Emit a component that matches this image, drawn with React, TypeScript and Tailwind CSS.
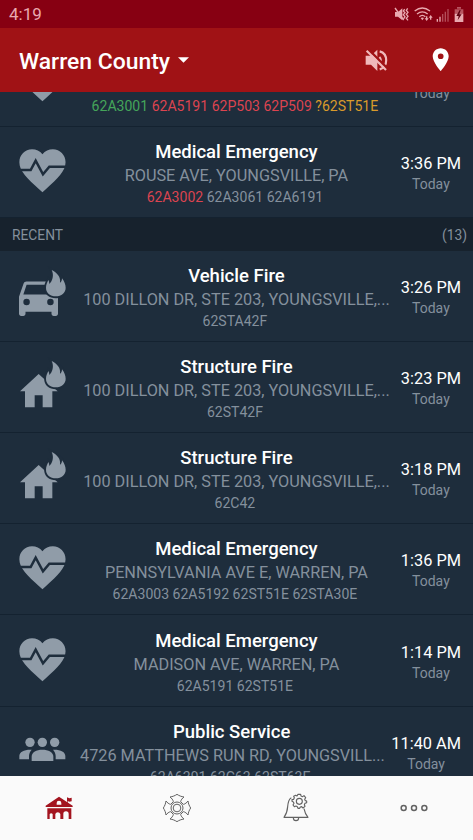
// App.tsx
// Incident feed: status bar, county selector, active/recent calls, bottom tabs
import clsx from 'clsx'
import type React from 'react'

type IconKind = 'medical' | 'vehicle' | 'structure' | 'people'
type UnitState = 'idle' | 'enroute' | 'onscene' | 'unknown'

interface Unit {
  id: string
  state?: UnitState
}

interface Incident {
  type: string
  icon: IconKind
  address: string
  units: Unit[]
  time: string
}

const ACTIVE: Incident[] = [
  {
    type: 'Medical Emergency',
    icon: 'medical',
    address: 'HAMILTON AVE, WARREN, PA',
    units: [
      { id: '62A3001', state: 'onscene' },
      { id: '62A5191', state: 'enroute' },
      { id: '62P503', state: 'enroute' },
      { id: '62P509', state: 'enroute' },
      { id: '?62ST51E', state: 'unknown' },
    ],
    time: '3:58 PM',
  },
  {
    type: 'Medical Emergency',
    icon: 'medical',
    address: 'ROUSE AVE, YOUNGSVILLE, PA',
    units: [{ id: '62A3002', state: 'enroute' }, { id: '62A3061' }, { id: '62A6191' }],
    time: '3:36 PM',
  },
]

const RECENT: Incident[] = [
  {
    type: 'Vehicle Fire',
    icon: 'vehicle',
    address: '100 DILLON DR, STE 203, YOUNGSVILLE,...',
    units: [{ id: '62STA42F' }],
    time: '3:26 PM',
  },
  {
    type: 'Structure Fire',
    icon: 'structure',
    address: '100 DILLON DR, STE 203, YOUNGSVILLE,...',
    units: [{ id: '62ST42F' }],
    time: '3:23 PM',
  },
  {
    type: 'Structure Fire',
    icon: 'structure',
    address: '100 DILLON DR, STE 203, YOUNGSVILLE,...',
    units: [{ id: '62C42' }],
    time: '3:18 PM',
  },
  {
    type: 'Medical Emergency',
    icon: 'medical',
    address: 'PENNSYLVANIA AVE E, WARREN, PA',
    units: [{ id: '62A3003' }, { id: '62A5192' }, { id: '62ST51E' }, { id: '62STA30E' }],
    time: '1:36 PM',
  },
  {
    type: 'Medical Emergency',
    icon: 'medical',
    address: 'MADISON AVE, WARREN, PA',
    units: [{ id: '62A5191' }, { id: '62ST51E' }],
    time: '1:14 PM',
  },
  {
    type: 'Public Service',
    icon: 'people',
    address: '4726 MATTHEWS RUN RD, YOUNGSVILL...',
    units: [{ id: '62A6391' }, { id: '62C63' }, { id: '62ST63E' }],
    time: '11:40 AM',
  },
]

const UNIT_COLORS: Record<UnitState, string> = {
  idle: 'text-[#84909c]',
  enroute: 'text-[#dc4450]',
  onscene: 'text-[#45a55a]',
  unknown: 'text-[#d99a2b]',
}

const Flame = () => (
  <path
    d="M155 45C171 53 183 66 180 83C184 81 186 76 186 70C193 79 197 89 197 98C197 114 184 124 168 124C150 124 138 114 138 98C138 88 142 82 145 75C147 78 148 82 148 87C157 79 163 61 155 45Z"
    stroke="#1e2d3c"
    strokeWidth="11"
    paintOrder="stroke"
  />
)

const IncidentIcon = ({ kind }: { kind: IconKind }) => {
  if (kind === 'medical') {
    return (
      <svg viewBox="54 84 144 144" className="size-12 overflow-visible fill-[#909ca8]">
        <path
          transform="translate(44.2 67) scale(6.93 7.02)"
          d="M12 21.35l-1.45-1.32C5.4 15.36 2 12.28 2 8.5 2 5.42 4.42 3 7.5 3c1.74 0 3.41.81 4.5 2.09C13.09 3.81 14.76 3 16.5 3 19.58 3 22 5.42 22 8.5c0 3.78-3.4 6.86-8.55 11.54L12 21.35z"
        />
        <path
          d="M56 150H92L107 122L129 163L148 140H200"
          fill="none"
          stroke="#1e2d3c"
          strokeWidth="7.5"
        />
      </svg>
    )
  }
  if (kind === 'people') {
    return (
      <svg viewBox="54 84 144 144" className="size-12 overflow-visible fill-[#909ca8]">
        <circle cx="90" cy="127" r="14" />
        <circle cx="164" cy="127" r="14" />
        <circle cx="127" cy="127" r="14" />
        <path d="M95 183V170C95 156 109 149 127 149S160 156 160 170V183Z" />
        <path d="M58 178V168C58 155 73 148 95 149C90 155 87 161 87 168V178Z" />
        <path d="M196 178V168C196 155 181 148 159 149C164 155 167 161 167 168V178Z" />
      </svg>
    )
  }
  return (
    <svg viewBox="54 51 144 144" className="size-12 overflow-visible fill-[#909ca8]">
      {kind === 'vehicle' ? (
        <path
          transform="translate(37.5 47.5) scale(6.5 6.45)"
          fillRule="evenodd"
          d="M18.92 6.01C18.72 5.42 18.16 5 17.5 5h-11c-.66 0-1.21.42-1.42 1.01L3 12v8c0 .55.45 1 1 1h1c.55 0 1-.45 1-1v-1h12v1c0 .55.45 1 1 1h1c.55 0 1-.45 1-1v-8l-2.08-5.99zM6.5 16a1.5 1.5 0 1 1 0-3 1.5 1.5 0 0 1 0 3zm11 0a1.5 1.5 0 1 1 0-3 1.5 1.5 0 0 1 0 3zM5 11l1.5-4.5h11L19 11H5z"
        />
      ) : (
        <path d="M116 84L173 136H157V184H128V148H104V184H75V136H60Z" />
      )}
      <Flame />
    </svg>
  )
}

const IncidentRow: React.FC<{ incident: Incident }> = ({ incident }) => (
  <div className="flex h-[91.2px] shrink-0 items-center border-b border-[#142230] pr-3 pl-[18px]">
    <div className="w-[62px] shrink-0">
      <IncidentIcon kind={incident.icon} />
    </div>
    <div className="min-w-0 flex-1 pt-[3px] text-center">
      <div className="text-[18.5px] leading-[23px] font-medium text-white">{incident.type}</div>
      <div className="text-[16.25px] leading-6 whitespace-nowrap text-[#84909c]">
        {incident.address}
      </div>
      <div className="pr-[3px] text-[14.05px] leading-[18px] whitespace-nowrap">
        {incident.units.map((unit) => (
          <span key={unit.id} className={UNIT_COLORS[unit.state ?? 'idle']}>
            {unit.id}{' '}
          </span>
        ))}
      </div>
    </div>
    <div className="ml-2 shrink-0 pt-[3px] text-center">
      <div className="text-[16.35px] leading-[21px] text-white">{incident.time}</div>
      <div className="text-[14px] leading-5 text-[#84909c]">Today</div>
    </div>
  </div>
)

const StatusBar = () => (
  <div className="flex h-7 shrink-0 items-center bg-[#870012] pr-[8.7px] pl-[9px] text-[#e9a9b0]">
    <span className="flex-1 text-[17px] leading-7">4:19</span>
    {/* vibrate */}
    <svg viewBox="483 15 48 50" className="mr-[4.3px] h-[16.7px] w-4 fill-current">
      <path d="M486 33H495L508 22V58L495 47H486Z" />
      <path
        d="M486 21L512 57M515 24L511 30L516 35L511 41L516 47L512 53M524 22L520 28L525 34L520 40L525 46L520 52L525 58"
        fill="none"
        stroke="currentColor"
        strokeWidth="4"
      />
    </svg>
    {/* wifi */}
    <svg viewBox="544 15 57 50" className="mr-[3px] h-[16.7px] w-[19px] fill-current">
      <path
        d="M546 30Q569 12 592 30M553 39Q569 26 585 39M560 47Q569 39 578 47"
        fill="none"
        stroke="currentColor"
        strokeWidth="4"
      />
      <path d="M564 51Q569 48 574 51L569 58ZM576 52H580V46H584V52H588L582 60ZM588 50L594 42L600 50H596V56H592V50Z" />
    </svg>
    {/* signal */}
    <svg viewBox="610 15 39 50" className="mr-[5px] h-[16.7px] w-[13px] fill-current">
      <path d="M612 54H616V62H612ZM620 47H624V62H620Z" />
      <path d="M628 39H632V62H628ZM636 32H640V62H636ZM644 24H648V62H644Z" opacity=".45" />
    </svg>
    {/* battery */}
    <svg viewBox="664 15 30 50" className="h-[16.7px] w-2.5 fill-current">
      <path d="M673 18H685V23H673ZM666 25H692V38H666Z" opacity=".5" />
      <path d="M666 38H692V63H666Z" />
      <path d="M681 27L671 45H678L675 58L687 40H680L684 27Z" fill="#5d0010" />
    </svg>
  </div>
)

const AppBar = () => (
  <div className="flex h-16 shrink-0 items-center bg-[#a01215] pr-[19px] pl-[19px] text-white">
    <span className="pt-[3px] text-[22.9px] leading-8 font-medium">Warren County</span>
    <svg viewBox="0 0 12 6" className="ml-2 h-1.5 w-[11px] fill-current">
      <path d="M0 0H12L6 6Z" />
    </svg>
    <svg
      viewBox="394 142 74 74"
      className="mr-[37.7px] ml-auto size-[24.7px] fill-[#f0b9bb]"
    >
      <path d="M399 165H415L434 147V211L415 192H399Z" />
      <path
        d="M440 169Q449 179 440 189M441 152C467 159 467 199 441 206"
        fill="none"
        stroke="#f0b9bb"
        strokeWidth="6.5"
      />
      <path d="M407 146L465 204" stroke="#a01215" strokeWidth="7" />
      <path d="M402 150L460 208" stroke="#f0b9bb" strokeWidth="6.5" />
    </svg>
    <svg viewBox="0 0 24 24" className="size-[27.4px] fill-current">
      <path d="M12 2C8.13 2 5 5.13 5 9c0 5.25 7 13 7 13s7-7.75 7-13c0-3.87-3.13-7-7-7zm0 9.5a2.5 2.5 0 1 1 0-5 2.5 2.5 0 0 1 0 5z" />
    </svg>
  </div>
)

const StationIcon = () => (
  <svg viewBox="129 276 96 96" className="size-8 fill-[#a3141f]">
    <path
      fillRule="evenodd"
      d="M177 290L218 317V321H137V317ZM177 302A7 7 0 0 0 170 309V314H184V309A7 7 0 0 0 177 302Z"
    />
    <path d="M201 292L208 295L215 293V304L208 305L203 303V310H201Z" />
    <path d="M142 325H214V357H206V342A8 8 0 0 0 190 342V357H181V342A8 8 0 0 0 166 342V357H158V342A7 7 0 0 0 149 342V357H142Z" />
  </svg>
)

const MalteseIcon = () => (
  <svg
    viewBox="484 276 96 96"
    className="size-8 fill-none stroke-[#626262] stroke-3"
    strokeLinejoin="round"
  >
    <circle cx="532" cy="324" r="11.5" />
    <circle cx="532" cy="324" r="18" />
    {[0, 90, 180, 270].map((deg) => (
      <path
        key={deg}
        transform={`rotate(${deg} 532 324)`}
        d="M517 309L521 305C520 299 516 295 511 291C519 290 526 287 532 283C538 287 545 290 553 291C548 295 544 299 543 305L547 309"
      />
    ))}
  </svg>
)

const BellIcon = () => (
  <svg
    viewBox="140 276 96 96"
    className="size-8 fill-none stroke-[#626262] stroke-[3.4]"
    strokeLinejoin="round"
  >
    <path d="M174 293C166 297 164 307 163 320C162 336 158 344 152 352H224C218 345 214 337 212 326M180 353A8 9 0 0 0 196 353" />
    <circle cx="198" cy="304" r="9" />
    <path d="M194 283H202L203 288L208 290L212 287L217 293L214 298L216 302L220 303V308L215 310L213 314L215 319L209 324L205 320L201 321L199 325H194L192 320L188 318L183 320L179 315L182 310L180 306L176 304V299L181 298L183 293L181 289L187 286L191 288Z" />
  </svg>
)

const MoreIcon = () => (
  <svg viewBox="495 276 96 96" className="size-8 fill-none stroke-[#626262] stroke-[4.5]">
    <circle cx="512" cy="324" r="7.5" />
    <circle cx="543" cy="324" r="7.5" />
    <circle cx="574" cy="324" r="7.5" />
  </svg>
)

const TABS = [
  { name: 'Station', icon: StationIcon },
  { name: 'Agencies', icon: MalteseIcon },
  { name: 'Alerts', icon: BellIcon },
  { name: 'More', icon: MoreIcon },
]

const App: React.FC = () => (
  <div
    className={clsx(
      'flex h-[840px] w-[473px] flex-col overflow-hidden bg-[#1e2d3c]',
      "font-['Roboto',sans-serif]",
    )}
  >
    <StatusBar />
    <AppBar />

    {/* list is scrolled partway into the first row */}
    <main className="min-h-0 flex-1 overflow-hidden">
      <div className="-mt-[56.5px] flex flex-col">
        {ACTIVE.map((incident) => (
          <IncidentRow key={incident.time} incident={incident} />
        ))}
        <div className="flex h-[32.8px] shrink-0 items-center justify-between bg-[#17222d] pt-0.5 pr-1.5 pl-3 text-[13.8px] text-[#84909c]">
          <span>RECENT</span>
          <span>(13)</span>
        </div>
        {RECENT.map((incident) => (
          <IncidentRow key={incident.time} incident={incident} />
        ))}
      </div>
    </main>

    <nav className="grid h-16 shrink-0 grid-cols-4 bg-[#fafafa]">
      {TABS.map(({ name, icon: Icon }) => (
        <button key={name} type="button" className="flex items-center justify-center">
          <Icon />
        </button>
      ))}
    </nav>
  </div>
)

export default App
